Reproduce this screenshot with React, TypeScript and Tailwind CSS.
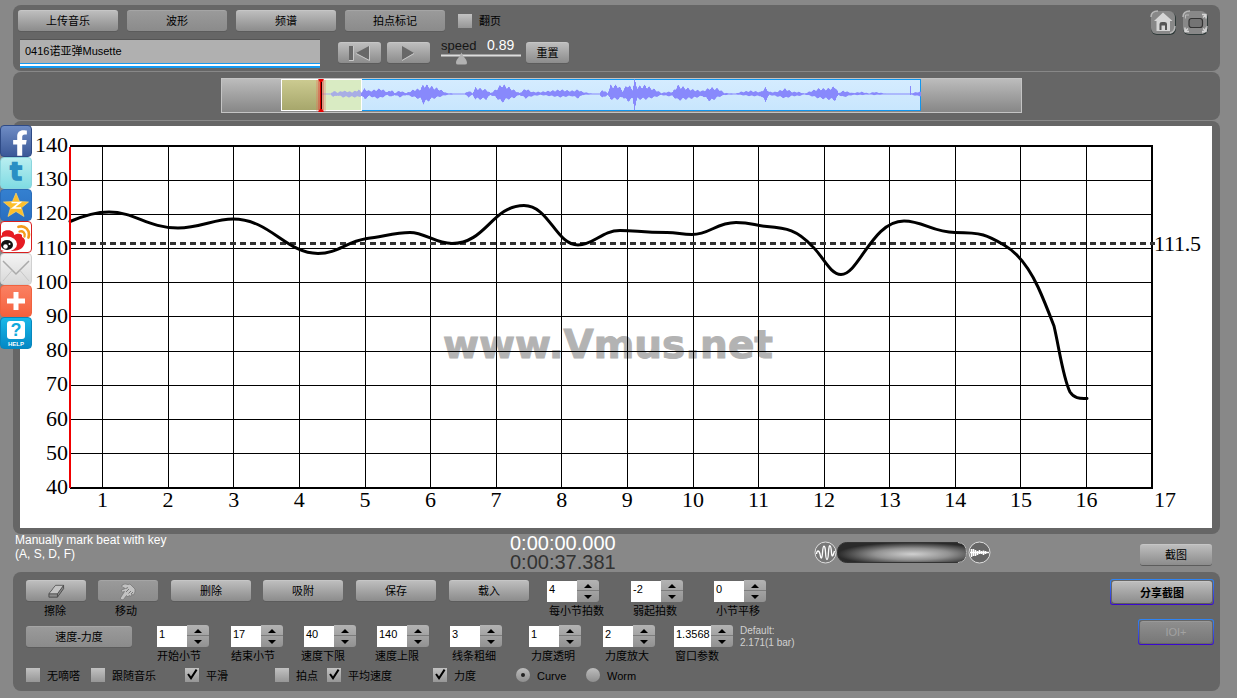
import React from "react";
import { FaFacebookF } from "react-icons/fa";

const raised =
  "flex items-center justify-center rounded-[3px] bg-gradient-to-b from-[#bdbdbd] to-[#8c8c8c] border-t border-[#c6c6c6] shadow-[0_1px_0_#5c5c5c] whitespace-nowrap";
const flat =
  "flex items-center justify-center rounded-[3px] bg-gradient-to-b from-[#9a9a9a] to-[#8b8b8b] border-t border-[#a5a5a5] shadow-[0_1px_0_#5c5c5c] whitespace-nowrap";

function Button({ className = "", pressed = false, children }: { className?: string; pressed?: boolean; children?: React.ReactNode }) {
  return <button className={`${pressed ? flat : raised} shrink-0 pt-px ${className.includes("h-[22px]") ? "" : "h-[21px]"} ${className}`}>{children}</button>;
}

function Check({ className = "", label, on = false }: { className?: string; label: string; on?: boolean }) {
  return (
    <label className={`flex h-[14px] shrink-0 items-center gap-[7px] ${className}`}>
      <span className="block h-[14px] w-[14px] bg-gradient-to-b from-[#c2c2c2] to-[#969696]">
        {on && (
          <svg viewBox="0 0 14 14" className="block h-[14px] w-[14px]">
            <path d="M3 6 L6 10.2 L11.6 1.6" fill="none" stroke="#000" strokeWidth="2" />
          </svg>
        )}
      </span>
      <span className="whitespace-nowrap pt-[2px]">{label}</span>
    </label>
  );
}

function Radio({ className = "", label, on = false }: { className?: string; label: string; on?: boolean }) {
  return (
    <label className={`flex h-[14px] shrink-0 items-center gap-[7px] ${className}`}>
      <span className="flex h-[14px] w-[14px] items-center justify-center rounded-full bg-gradient-to-b from-[#bdbdbd] to-[#8e8e8e]">
        {on && <span className="h-1 w-1 rounded-full bg-[#222]" />}
      </span>
      <span className="whitespace-nowrap pt-[3px]">{label}</span>
    </label>
  );
}

function Spinner({ value, label, className = "", labelClass = "ml-[2px]", field = "w-[30px]" }: { value: string; label: string; className?: string; labelClass?: string; field?: string }) {
  return (
    <div className={`flex w-[52px] shrink-0 flex-col ${className}`}>
      <div className="flex h-[22px]">
        <div className={`mt-px h-[21px] shrink-0 bg-white pl-[2px] leading-[17px] ${field}`}>{value}</div>
        <div className="flex h-[22px] w-[22px] shrink-0 flex-col rounded-r-[3px] bg-gradient-to-b from-[#b3b3b3] to-[#929292]">
          <span className="flex h-[11px] items-center justify-center border-b border-[#7c7c7c]">
            <svg viewBox="0 0 8 4" className="mt-px h-1 w-2"><path d="M4 0 8 4H0Z" /></svg>
          </span>
          <span className="flex h-[11px] items-center justify-center">
            <svg viewBox="0 0 8 4" className="h-1 w-2"><path d="M4 4 0 0H8Z" /></svg>
          </span>
        </div>
      </div>
      <div className={`mt-px h-4 whitespace-nowrap leading-4 ${labelClass}`}>{label}</div>
    </div>
  );
}

// Envelope of the clip: x, amplitude above the axis, amplitude below.
const envelope: [number, number, number][] = [
  [321, 0.4, 0.4], [330, 0.4, 0.4], [333, 3, 3], [337, 1.5, 1.5], [342, 3, 3], [352, 2, 3], [358, 4, 3], [361, 2, 2],
  [364, 5, 5], [369, 3, 2], [375, 4, 4], [380, 5, 4], [387, 2, 1], [391, 4, 3], [394, 1, 1], [399, 3, 3], [406, 1, 1],
  [413, 4, 3], [420, 5, 5], [423, 9, 9], [431, 7, 5], [438, 5, 3], [446, 1, 1], [455, 0.4, 0.4], [464, 0.4, 0.4],
  [468, 3, 3], [472, 1, 1], [475, 6, 5], [486, 4, 5], [490, 1, 1], [495, 4, 3], [501, 9, 8], [507, 7, 5], [513, 4, 4],
  [519, 1, 1], [525, 5, 4], [532, 2, 2], [540, 2, 1], [550, 3, 2], [560, 4, 3], [571, 3, 2], [578, 4, 4], [582, 2, 1],
  [592, 0.4, 0.4], [599, 0.4, 0.4], [602, 4, 4], [607, 1, 1], [610, 8, 5], [618, 8, 5], [622, 3, 3], [627, 9, 7],
  [632, 5, 5], [634, 13, 14], [637, 7, 5], [645, 8, 5], [655, 4, 3], [661, 1, 1], [667, 2, 2], [672, 2, 2], [677, 8, 6],
  [685, 6, 5], [693, 4, 4], [702, 3, 2], [710, 6, 7], [718, 5, 3], [724, 1, 1], [735, 0.4, 0.4], [740, 2, 1],
  [750, 3, 2], [760, 2, 2], [765, 6, 7], [769, 2, 1], [775, 2, 2], [785, 5, 4], [792, 2, 2], [798, 2, 2], [804, 0.5, 0.5],
  [811, 3, 2], [818, 5, 4], [827, 5, 5], [835, 7, 6], [838, 1, 1], [843, 3, 3], [852, 1, 1], [861, 2, 1], [869, 0.5, 0.5],
  [873, 2, 1], [886, 0.4, 0.4], [909, 0.4, 0.4], [912, 1, 1], [917, 2, 2], [921, 2, 2],
];

function wavePath() {
  let d = "";
  for (let i = 0; i < envelope.length - 1; i++) {
    const [x0, u0, l0] = envelope[i];
    const [x1, u1, l1] = envelope[i + 1];
    for (let x = x0; x < x1; x++) {
      const t = (x - x0) / (x1 - x0);
      const u = u0 + (u1 - u0) * t;
      const l = l0 + (l1 - l0) * t;
      const j = 0.95 + 0.2 * Math.sin(x * 1.3);
      const k = 0.95 + 0.2 * Math.cos(x * 1.1);
      d += `M${x + 0.5} ${94 - Math.max(0.5, u * j)}V${94 + Math.max(0.5, l * k)}`;
    }
  }
  return d + "M910.5 86V95M634.5 82V108";
}

function Overview() {
  return (
    <div className="ml-[208px] flex h-[35px] w-[801px] border border-[#c4c4c4] bg-gradient-to-b from-[#bcbcbc] to-[#878787]">
      <svg viewBox="222 79 799 33" className="block h-[33px] w-[799px]">
        <defs>
          <linearGradient id="sky" x1="0" y1="0" x2="0" y2="1"><stop offset="0" stopColor="#d5ecff" /><stop offset="1" stopColor="#c8e6fd" /></linearGradient>
          <linearGradient id="olive" x1="0" y1="0" x2="0" y2="1"><stop offset="0" stopColor="#cccb91" /><stop offset="1" stopColor="#a6a66b" /></linearGradient>
        </defs>
        <rect x="321.5" y="79.5" width="599" height="31" fill="url(#sky)" stroke="#1296ee" />
        <rect x="281.5" y="79.5" width="40" height="31" fill="url(#olive)" stroke="#fff" />
        <rect x="321.5" y="79.5" width="40" height="31" fill="#d9f0c3" stroke="#fff" />
        <path d={wavePath()} stroke="#8889fc" strokeWidth="1" />
        <rect x="322" y="80" width="39" height="30" fill="#d9e4c3" opacity="0.4" />
        <rect x="316" y="80" width="10" height="31" fill="#f06050" opacity="0.25" />
        <rect x="318" y="80" width="6" height="31" fill="#e53030" opacity="0.35" />
        <path d="M321.5 79V112" stroke="#330000" />
        <path d="M320.5 79V112" stroke="#e80000" />
        <path d="M318 79H324L322 82H320ZM318 112H324L322 109H320Z" fill="#e80000" />
      </svg>
    </div>
  );
}

const bars = Array.from({ length: 16 }, (_, i) => i + 1);
const tempi = [140, 130, 120, 110, 100, 90, 80, 70, 60, 50, 40];
const curve =
  "M70 221.5C84 215.5 96 212 109 212C135 212 148 228 178 228C200 228 214 219 233 219C270 219 286 253.5 318 253.5C338 253.5 345 242 367 238.5C383 236.5 396 232.5 410 232.5C425 232.5 435 243.5 452 243.5C486 243.5 492 205.5 524 205.5C549 205.5 556 245 578 245C594 245 602 230.5 620 230.5C637 230.5 640 232.5 667 232.5C678 232.5 681 234.5 692 234.5C710 234.5 716 222.5 736 222.5C752 222.5 754 225.5 767 226.5C787 228 797 230 812 246C823 256 830 274.5 841 274.5C859 274.5 872 221 904 221C923 221 933 232.5 955 232.5C982 232.5 987 235 1004 245C1018 253 1030 270 1038 287C1044 300 1049 313 1054 326C1059 347 1063 378 1070 392C1074 398 1079 399 1087 398.5";

function Chart() {
  return (
    <svg viewBox="20 126 1192 402" className="block h-[402px] w-[1192px] bg-white" fontFamily="'Liberation Serif', serif" fontSize="22">
      <text x="443" y="358" textLength="330" lengthAdjust="spacingAndGlyphs" fontFamily="'DejaVu Sans', sans-serif" fontWeight="700" fontSize="39" fill="#b3b3b3" stroke="#b3b3b3" strokeWidth="1">www.Vmus.net</text>
      <g stroke="#000" strokeWidth="1" shapeRendering="crispEdges">
        {bars.map((b) => {
          const x = Math.floor(102.6 + (b - 1) * 65.6) + 0.5;
          return <path key={b} d={`M${x} 146V488`} />;
        })}
        {tempi.slice(1, 10).map((t, i) => {
          const y = Math.floor(146.2 + (i + 1) * 34.15) + 0.5;
          return <path key={t} d={`M70 ${y}H1152`} />;
        })}
      </g>
      <path d="M70 146H1152V488H70" fill="none" stroke="#000" strokeWidth="2" />
      <path d="M70 243.5H1155" stroke="#333" strokeWidth="3" strokeDasharray="6 4" />
      <path d={curve} fill="none" stroke="#000" strokeWidth="3" strokeLinecap="round" strokeLinejoin="round" />
      <path d="M70 147V488" stroke="#f00000" strokeWidth="2" />
      {tempi.map((t, i) => (
        <text key={t} x="68" y={152 + i * 34.2} textAnchor="end">{t}</text>
      ))}
      {bars.map((b) => (
        <text key={b} x={102.5 + (b - 1) * 65.6} y="507" textAnchor="middle">{b}</text>
      ))}
      <text x="1165" y="507" textAnchor="middle">17</text>
      <text x="1154" y="250.5" textLength="47">111.5</text>
    </svg>
  );
}

const tile = "flex h-8 w-8 justify-center overflow-hidden rounded-[4px] border";

function ShareBar() {
  return (
    <div className="absolute left-0 top-[125px] flex w-8 flex-col">
      <div className={`${tile} items-end border-[#2e4a85] bg-gradient-to-b from-[#6f8cc4] to-[#3b5998] pl-[8px]`}>
        <FaFacebookF className="h-[26px] w-4 text-white" />
      </div>
      <div className={`${tile} items-center border-[#8ad5dd] bg-gradient-to-b from-[#b8eef0] to-[#7fdbe3]`}>
        <span className="block h-[30px] text-[25px] font-bold leading-[27px] text-[#2a8fc4] [-webkit-text-stroke:1.5px_#2a8fc4] [font-family:'DejaVu_Sans',sans-serif]">t</span>
      </div>
      <div className={`${tile} items-center border-[#2a6bb8] bg-gradient-to-b from-[#3480d0] to-[#2a6fc0]`}>
        <svg viewBox="0 0 30 30" className="h-[30px] w-[30px]">
          <path d="M15 3 18.500 11.500 27.500 12 20.500 17.800 23 26.500 15 21.500 7 26.500 9.500 17.800 2.500 12 11.500 11.500Z" fill="#fdbf2a" stroke="#f9d670" strokeWidth=".7" />
          <path d="M10.500 12.500H19L12 18H20" fill="none" stroke="#fff" strokeWidth="1.6" />
        </svg>
      </div>
      <div className={`${tile} items-center border-[#d81f1f] bg-white`}>
        <svg viewBox="0 0 30 30" className="h-[30px] w-[30px]">
          <path d="M1 13C0 8 9 7 12 10C13 11 13 12 13 13C17 11 22 11 21 15C26 17 24 23 21 26C19 28 15 29 10 29H0V14Z" fill="#e61c23" />
          <ellipse cx="6" cy="22" rx="10" ry="7.5" fill="#fff" />
          <ellipse cx="6" cy="23" rx="6" ry="5" fill="#111" />
          <circle cx="4.500" cy="24.500" r="2.300" fill="#fff" /><circle cx="8.500" cy="22" r="1" fill="#fff" />
          <path d="M17.500 4.800C24 3 29.500 8 27.500 15.500" fill="none" stroke="#f49b1c" strokeWidth="2.700" strokeLinecap="round" />
          <path d="M18.500 9.500C22 8.500 24.500 11 23.500 14.500" fill="none" stroke="#f49b1c" strokeWidth="2.300" strokeLinecap="round" />
        </svg>
      </div>
      <div className={`${tile} items-center border-[#d0d0d0] bg-gradient-to-b from-[#f4f4f4] to-[#d8d8d8]`}>
        <svg viewBox="0 0 30 30" className="h-[30px] w-[30px]" fill="none" stroke="#aaa">
          <path d="M2 7 15 20 28 7" strokeWidth="1.500" /><path d="M2 27 11 16.500M28 27 19 16.500" stroke="#c6c6c6" />
        </svg>
      </div>
      <div className={`${tile} items-center border-[#f0623f] bg-gradient-to-b from-[#fa8062] to-[#f5603c]`}>
        <svg viewBox="0 0 30 30" className="h-[30px] w-[30px]"><path d="M15 6V24M6 15H24" stroke="#fff" strokeWidth="5" /></svg>
      </div>
      <div className={`${tile} flex-col items-center border-[#0787bd] bg-gradient-to-b from-[#18b8e8] to-[#0588c5]`}>
        <span className="mt-[2px] flex h-[18px] w-[18px] shrink-0 items-center justify-center rounded-[3px] bg-white text-[18px] font-bold leading-[18px] text-[#10a9dc]">?</span>
        <span className="mt-px text-[6px] font-bold leading-[8px] text-white">HELP</span>
      </div>
    </div>
  );
}

function RoundTool({ children }: { children: React.ReactNode }) {
  return (
    <svg viewBox="0 0 26 26" className="h-[26px] w-[26px]">
      <rect x="1" y="2" width="25" height="23" rx="6" fill="#303b3a" /><rect x="1" y="1" width="24" height="23" rx="6" fill="#888" />
      <path d="M1 7Q1 1 8 1 M20 23Q25 22 25 16" stroke="#b8b8b8" fill="none" strokeWidth="1.500" />
      {children}
    </svg>
  );
}

function TopPanel() {
  return (
    <section className="flex h-[66px] justify-between rounded-[8px] bg-[#666] pl-[5px] pr-3 pt-[5px]">
      <div>
        <div className="flex h-[21px] items-center gap-[9px]">
          <Button className="w-[100px]">上传音乐</Button>
          <Button className="w-[100px]" pressed>波形</Button>
          <Button className="w-[100px]">频谱</Button>
          <Button className="w-[100px]" pressed>拍点标记</Button>
          <Check className="ml-1" label="翻页" />
        </div>
        <div className="mt-2 flex items-start">
          <div className="ml-[2px] h-[29px] w-[300px] border-t border-[#555] bg-[#b0b0b0]">
            <div className="h-[23px] pl-[5px] leading-[23px]">0416诺亚弹Musette</div>
            <div className="h-[5px] border-b-2 border-t border-[#159bf3] bg-white" />
          </div>
          <Button className="ml-[18px] mt-[3px] w-[43px]">
            <svg viewBox="0 0 43 21" className="h-[21px] w-[43px]">
              <path d="M11 3H15V17H11ZM31 3V17L18 10Z" fill="#686868" /><path d="M15.500 3V17.500H11M31.500 3V17.500L18 10.500" fill="none" stroke="#c8c8c8" />
            </svg>
          </Button>
          <Button className="ml-[6px] mt-[3px] w-[43px]">
            <svg viewBox="0 0 43 21" className="h-[21px] w-[43px]">
              <path d="M15 3 27 10 15 17Z" fill="#686868" /><path d="M27 10.500 15 17.500" stroke="#c8c8c8" />
            </svg>
          </Button>
          <div className="-mt-[3px] ml-[11px] w-[80px]">
            <div className="flex h-4 items-center gap-[9px] pt-[2px]">
              <span className="w-[37px] text-[13px] text-[#151515]">speed</span><span className="text-[14px] text-white">0.89</span>
            </div>
            <svg viewBox="441 52 80 13" className="block h-[13px] w-[80px]">
              <path d="M441 55.500H521" stroke="#ddd" strokeWidth="2" /><path d="M461.500 52.500C463 57 467 59 467 63Q467 64.500 465 64.500H458Q456 64.500 456 63C456 59 460 57 461.500 52.500Z" fill="#b2b2b2" />
            </svg>
          </div>
          <Button className="ml-[5px] mt-[3px] w-[43px]">重置</Button>
        </div>
      </div>
      <div className="flex gap-[6px]">
        <RoundTool><path d="M13 2.500 4 11H6.500V21H20V11H22.500Z" fill="#d5d5d5" /><path d="M9.500 20V14Q9.500 12 12 12H14.500Q17 12 17 14V20H15V15.500H11.500V20Z" fill="#555" /></RoundTool>
        <RoundTool>
          <rect x="7" y="8.500" width="13.500" height="9" rx="2.500" fill="#747474" stroke="#333" strokeWidth="1.200" />
          <path d="M20 4.500H24V8.500M24 4.500 21 7.500M3 17.500V21.500H7M3 21.500 6 18.500M20 21.500H24V17.500M24 21.500 21 18.500" fill="none" stroke="#d5d5d5" strokeWidth="1.500" />
          <path d="M3.500 8.500V5H7" fill="none" stroke="#bbb" />
        </RoundTool>
      </div>
    </section>
  );
}

function StatusRow() {
  return (
    <section className="flex h-[38px] items-start pl-[2px]">
      <div className="-mt-px w-[495px] whitespace-nowrap text-[12px] leading-[14px] text-white">Manually mark beat with key<br />(A, S, D, F)</div>
      <div className="w-[106px] whitespace-nowrap text-[20px] leading-[19px]">
        <div className="text-white">0:00:00.000</div>
        <div className="text-[#333]">0:00:37.381</div>
      </div>
      <svg viewBox="813 540 178 25" className="ml-[197px] mt-[6px] block h-[25px] w-[178px]">
        <defs>
          <radialGradient id="knob" cx=".58" cy=".58" r=".58"><stop offset="0" stopColor="#d0d0d0" /><stop offset=".5" stopColor="#929292" /><stop offset="1" stopColor="#2a2a2a" /></radialGradient>
        </defs>
        <rect x="837.500" y="542.500" width="129" height="20" rx="9" fill="url(#knob)" stroke="#333" />
        <path d="M958 542.500Q966.500 543 966.500 552.500Q966.500 562 958 562.500" fill="none" stroke="#bbb" />
        <circle cx="825.500" cy="552.500" r="10.500" fill="#777" stroke="#ddd" /><circle cx="979.500" cy="552.500" r="10.500" fill="#666" stroke="#ddd" />
        <path d="M816.500 554C817 550 819 550 820 554C821 560 822 559 822.500 553C823 544 825 544 825.500 552C826 562 828 562 828.500 552C829 543 831 544 831.500 553C832 558 833 556 834.500 551" fill="none" stroke="#fff" strokeWidth="1.300" />
        <path d="M970 552.500H989M971.500 549V557M973.500 549V556M975.500 550V556M977.500 551V555M979.500 550V554M981.500 551V554M983.500 550.500V555M985.500 551V554" stroke="#fff" strokeWidth="1.600" />
      </svg>
      <Button className="ml-[149px] mt-[10px] w-[72px]">截图</Button>
    </section>
  );
}

const framed = "rounded-[3px] bg-gradient-to-b from-[#2f86f5] to-[#3a00d0] p-px";

function ControlPanel() {
  return (
    <section className="flex h-[119px] justify-between rounded-[8px] bg-[#666] pl-[13px] pr-[6px]">
      <div>
        <div className="flex h-[45px] items-start pt-2">
          <div className="w-[60px]">
            <Button className="w-[60px]">
              <svg viewBox="0 0 20 18" className="h-[17px] w-[19px]"><path d="M2 11.500 9 2.500H17.500V6L11 15H2Z" fill="#8a8a8a" stroke="#4a4a4a" strokeLinejoin="round" /><path d="M2.500 11.500 9 3H17L11 11.500Z" fill="#c4c4c4" /><path d="M2 11.500H11L17.500 2.500M11 11.500V15" fill="none" stroke="#4a4a4a" /></svg>
            </Button>
            <div className="mt-[2px] pr-[2px] text-center leading-4">擦除</div>
          </div>
          <div className="ml-3 w-[60px]">
            <Button className="w-[60px]" pressed>
              <svg viewBox="0 0 18 18" className="h-[18px] w-[18px]" strokeLinejoin="round"><path d="M3 2Q6 0 9 1.500L11 1 14 4 16 6V9L14.500 12 12.500 11.500 12 13.500 10 12.500 9 14 7.500 12.500 4.500 16.500Q3 17.500 1.500 16Q1 15 2 14L5.500 8.500 3.500 9Q1.500 8.500 2.500 7L6.500 5.500 4 4.500Q2.500 3.500 3 2Z" fill="#c2c2c2" stroke="#777" strokeWidth=".8" /><path d="M7 9 10 6M9.500 10.500 12 8M12 11 14 9M7 5.500 9 4.500" stroke="#777" /></svg>
            </Button>
            <div className="mt-[2px] pr-1 text-center leading-4">移动</div>
          </div>
          <Button className="ml-[13px] w-[80px]">删除</Button>
          <Button className="ml-[12px] w-[80px]">吸附</Button>
          <Button className="ml-[13px] w-[80px]">保存</Button>
          <Button className="ml-[13px] w-[80px]">载入</Button>
          <Spinner className="ml-[18px]" value="4" label="每小节拍数" />
          <Spinner className="ml-[32px]" value="-2" label="弱起拍数" />
          <Spinner className="ml-[31px]" value="0" label="小节平移" />
        </div>
        <div className="flex h-[51px] items-start pt-2">
          <Button className="mt-px w-[106px]" pressed>速度-力度</Button>
          <Spinner className="ml-[25px]" value="1" label="开始小节" labelClass="ml-0" />
          <Spinner className="ml-[22px]" value="17" label="结束小节" labelClass="ml-0" />
          <Spinner className="ml-[21px]" value="40" label="速度下限" labelClass="-ml-[3px]" />
          <Spinner className="ml-[21px]" value="140" label="速度上限" labelClass="-ml-[2px]" />
          <Spinner className="ml-[21px]" value="3" label="线条粗细" />
          <Spinner className="ml-[27px]" value="1" label="力度透明" />
          <Spinner className="ml-[22px]" value="2" label="力度放大" />
          <Spinner className="ml-[19px]" value="1.3568" label="窗口参数" labelClass="ml-px" field="w-[37px]" />
          <div className="ml-[14px] whitespace-nowrap text-[10px] leading-[12px] text-[#d0d0d0]">Default:<br />2.171(1 bar)</div>
        </div>
        <div className="flex h-[14px] items-center">
          <Check className="w-[65px]" label="无嘀嗒" />
          <Check className="w-[94px]" label="跟随音乐" />
          <Check className="w-[90px]" label="平滑" on />
          <Check className="w-[52px]" label="拍点" />
          <Check className="w-[106px]" label="平均速度" on />
          <Check className="w-[83px]" label="力度" on />
          <Radio className="w-[70px]" label="Curve" on />
          <Radio label="Worm" />
        </div>
      </div>
      <div className="flex flex-col items-end gap-[14px] pt-[7px]">
        <div className={framed}>
          <div className="rounded-[2px] bg-[#666] p-px"><Button className="h-[22px] w-[100px] font-bold">分享截图</Button></div>
        </div>
        <div className={framed}>
          <div className="rounded-[2px] bg-[#666] p-px">
            <button className="flex h-[22px] w-[72px] items-center justify-center rounded-[3px] border-t border-[#999] bg-gradient-to-b from-[#8e8e8e] to-[#787878] text-[#a2a2a2]">IOI+</button>
          </div>
        </div>
      </div>
    </section>
  );
}

export default function App() {
  return (
    <main className="relative h-[698px] w-[1237px] overflow-hidden bg-[#888] pl-[13px] pr-[17px] pt-[5px] text-[11px] leading-none text-black [font-family:'Liberation_Sans','Noto_Sans_CJK_SC',sans-serif]">
      <TopPanel />
      <section className="mt-px h-[48px] rounded-[8px] bg-[#666] pt-[6px]"><Overview /></section>
      <section className="mt-px h-[413px] rounded-[8px] bg-[#666] pl-[7px] pt-[5px]"><Chart /></section>
      <StatusRow />
      <ControlPanel />
      <ShareBar />
    </main>
  );
}
